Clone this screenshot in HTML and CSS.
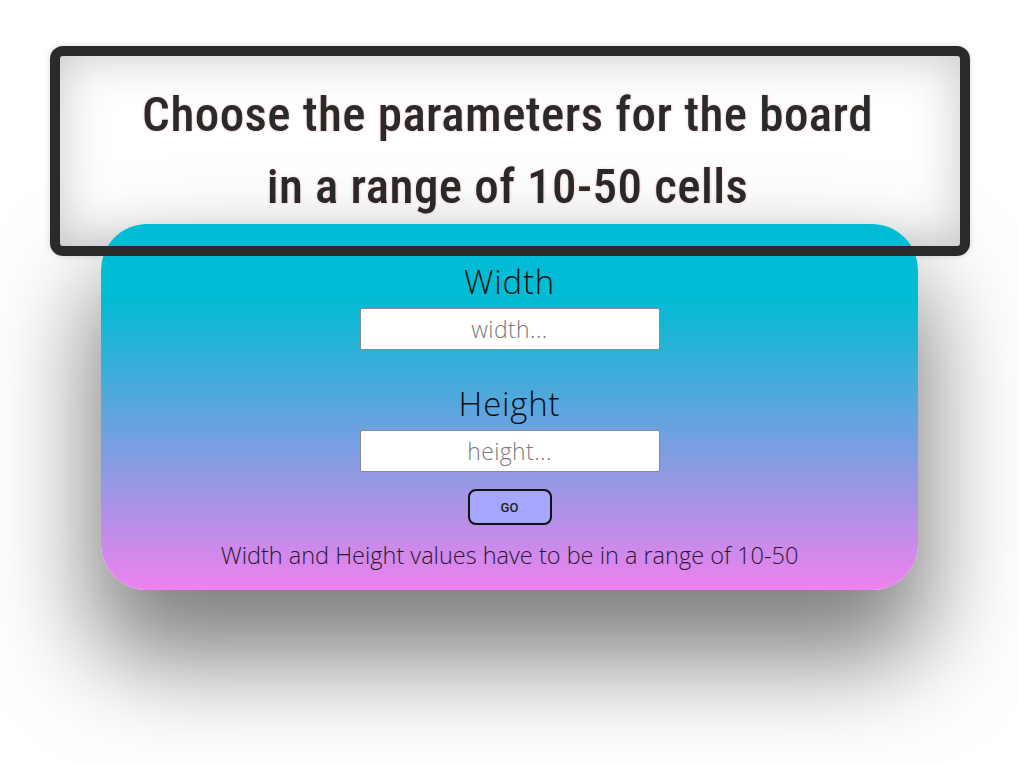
FILE: index.html
```html
<!DOCTYPE html>
<html lang="en">
<head>
<meta charset="utf-8">
<title>Board parameters</title>
<link rel="stylesheet" href="styles.css">
</head>
<body>
<div class="page">
  <div class="banner">
    <h1 class="banner-title">Choose the parameters for the board<br>in a range of 10-50 cells</h1>
  </div>
  <form class="card">
    <label class="field-label" for="w">Width</label>
    <input class="field-input" id="w" type="text" placeholder="width...">
    <label class="field-label field-label-second" for="h">Height</label>
    <input class="field-input" id="h" type="text" placeholder="height...">
    <button class="go-btn" type="button">GO</button>
    <p class="hint">Width and Height values have to be in a range of 10-50</p>
  </form>
</div>
</body>
</html>
```
FILE: styles.css
```css
html, body {
  margin: 0;
  padding: 0;
  background: #ffffff;
  min-height: 764px;
}
.page {
  width: 1019px;
  min-height: 764px;
  padding-top: 46px;
  box-sizing: border-box;
  display: flex;
  flex-direction: column;
  align-items: center;
}
.banner {
  position: relative;
  box-sizing: border-box;
  width: 920px;
  height: 210px;
  padding: 10px;
  border-radius: 13px;
  background: #ffffff;
  box-shadow: inset 0 0 0 10px #ffffff, inset 0 0 50px 10px rgba(0, 0, 0, 0.22), 0 0 6px rgba(0, 0, 0, 0.15);
  display: flex;
  align-items: center;
  justify-content: center;
}
.banner::after {
  content: "";
  position: absolute;
  inset: 0;
  border: 10px solid #2a2a2a;
  border-radius: 13px;
  z-index: 2;
  pointer-events: none;
}
.banner-title {
  margin: 0 4px 0 0;
  font-family: Roboto, "Liberation Sans", sans-serif;
  font-stretch: 78%;
  font-weight: 470;
  font-size: 49px;
  line-height: 72px;
  letter-spacing: 0.45px;
  color: #2a2a2a;
  text-align: center;
  text-shadow: 0 0 2px #ffe4e4, 0 0 2px #ffe4e4, 0 0 3px #ffe4e4, 0 0 3px #ffe4e4;
}
.card {
  position: relative;
  z-index: 1;
  box-sizing: border-box;
  width: 817px;
  height: 366px;
  margin: -32px 0 0;
  padding-top: 38px;
  border-radius: 46px;
  background: linear-gradient(180deg, #00bcd4 20%, #ee82ee 100%);
  box-shadow: 0 60px 100px 10px rgba(0, 0, 0, 0.5);
  display: flex;
  flex-direction: column;
  align-items: center;
  font-family: "Open Sans", "Liberation Sans", sans-serif;
}
.field-label {
  font-size: 33px;
  line-height: 40px;
  font-weight: 300;
  letter-spacing: 0.8px;
  color: #111111;
}
.field-label-second {
  margin-top: 34px;
}
.field-input {
  box-sizing: border-box;
  width: 300px;
  height: 42px;
  margin-top: 6px;
  border: 1px solid #8a8a8a;
  border-radius: 2px;
  background: #ffffff;
  font-family: inherit;
  font-weight: 300;
  font-size: 23px;
  letter-spacing: 0.4px;
  text-align: center;
  color: #333;
  padding: 0 8px;
  outline: none;
}
.field-input::placeholder {
  color: #7a7a7a;
}
.go-btn {
  box-sizing: border-box;
  width: 84px;
  height: 36px;
  margin-top: 17px;
  border: 2px solid #111111;
  border-radius: 8px;
  background: #a6a6ff;
  font-family: Roboto, "Liberation Sans", sans-serif;
  font-stretch: 90%;
  font-weight: 500;
  font-size: 13px;
  color: #222222;
  padding: 0;
}
.hint {
  margin: 15px 0 0;
  font-size: 23.5px;
  line-height: 30px;
  font-weight: 300;
  color: #2a1830;
}
```
